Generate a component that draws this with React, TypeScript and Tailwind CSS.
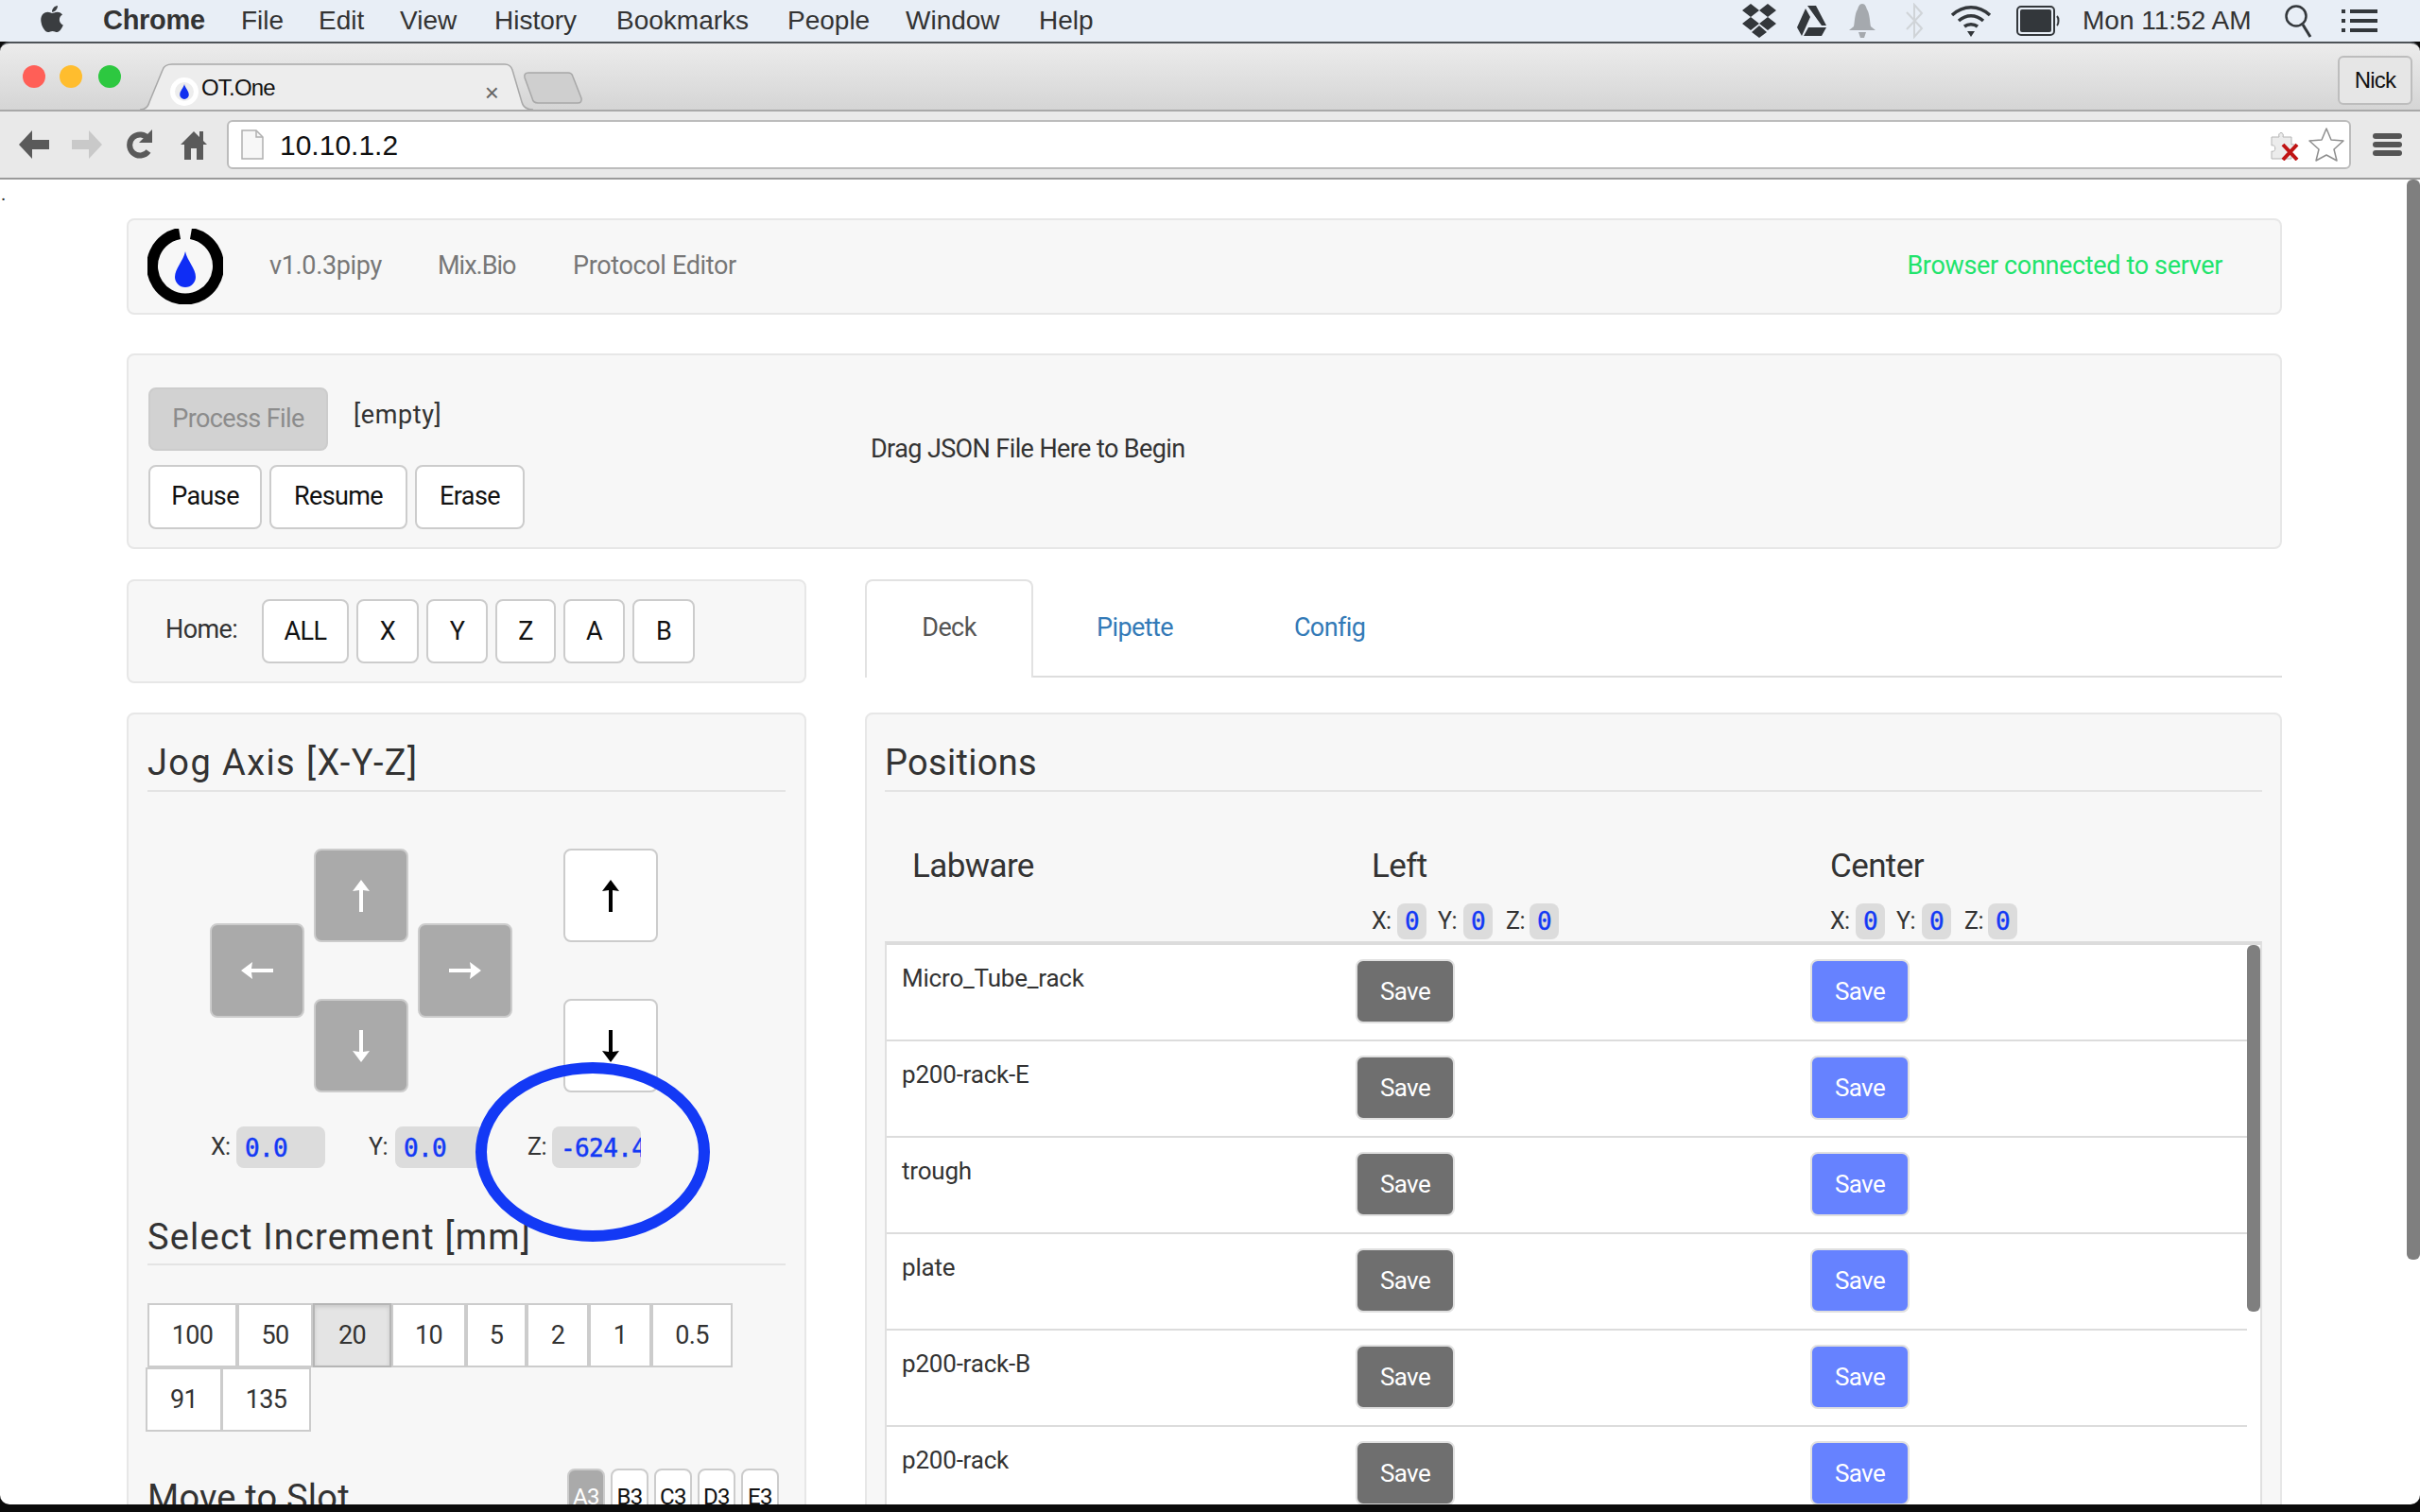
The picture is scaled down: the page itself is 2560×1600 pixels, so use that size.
import { FaApple } from "react-icons/fa";

const ui = "font-['Roboto',sans-serif]";
const panel = "rounded-lg border-2 border-[#e7e7e7] bg-[#f7f7f7]";
const whiteBtn = "flex items-center justify-center rounded-lg border-2 border-[#ccc] bg-white text-[#111]";
const grey = "flex h-full w-full items-center justify-center rounded-lg border-2 border-[#ccc] bg-[#aaa] text-white";

const menus = [
  { label: "File", w: "w-[82px]" },
  { label: "Edit", w: "w-[86px]" },
  { label: "View", w: "w-[100px]" },
  { label: "History", w: "w-[129px]" },
  { label: "Bookmarks", w: "w-[181px]" },
  { label: "People", w: "w-[125px]" },
  { label: "Window", w: "w-[141px]" },
  { label: "Help", w: "w-[60px]" },
];

const homeKeys = [
  { label: "ALL", w: "w-[92px]" },
  { label: "X", w: "w-[66px]" },
  { label: "Y", w: "w-[65px]" },
  { label: "Z", w: "w-[64px]" },
  { label: "A", w: "w-[65px]" },
  { label: "B", w: "w-[66px]" },
];

const increments = [
  { t: "100", w: "w-[95px]" },
  { t: "50", w: "w-[80px]" },
  { t: "20", w: "w-[83px]" },
  { t: "10", w: "w-[79px]" },
  { t: "5", w: "w-[64px]" },
  { t: "2", w: "w-[66px]" },
  { t: "1", w: "w-[66px]" },
  { t: "0.5", w: "w-[86px]" },
];

const rows = ["Micro_Tube_rack", "p200-rack-E", "trough", "plate", "p200-rack-B", "p200-rack"];

function Arrow({ dir, className = "" }: { dir: "up" | "down" | "left" | "right"; className?: string }) {
  const rot = { up: "rotate-0", down: "rotate-180", left: "-rotate-90", right: "rotate-90" }[dir];
  return (
    <svg viewBox="0 0 18 34" className={`h-[34px] w-[18px] ${rot} ${className}`} fill="currentColor">
      <path d="M9 0 L18 12 L11 11 L11 34 L7 34 L7 11 L0 12 Z" />
    </svg>
  );
}

function MenuBar() {
  return (
    <div className="flex h-[44px] items-center bg-[#e8eef6] font-['Liberation_Sans',sans-serif] text-[28px] text-[#333]">
      <FaApple className="ml-[39px] mb-1 h-[32px] w-[32px] text-[#3a3d40]" />
      <span className="ml-[38px] w-[146px] text-[29px] font-bold tracking-[-0.3px]">Chrome</span>
      {menus.map((m) => (
        <span key={m.label} className={m.w}>{m.label}</span>
      ))}
      <div className="ml-auto flex items-center">
        <svg viewBox="0 0 36 38" className="h-[38px] w-[36px] text-[#33373b]" fill="currentColor">
          <path d="M9 1 L18 8 L9 15 L0 8 Z M27 1 L36 8 L27 15 L18 8 Z M9 15 L18 22 L9 29 L0 22 Z M27 15 L36 22 L27 29 L18 22 Z M18 24 L26 31 L18 37 L10 31 Z" />
        </svg>
        <svg viewBox="0 0 32 34" className="ml-[22px] h-[34px] w-[32px] text-[#33373b]" fill="currentColor">
          <path d="M11 1 L20 1 L31 22 L26 22 Z M9 4 L14 13 L5 33 L0 24 Z M12 24 L31 24 L26 33 L7 33 Z" />
        </svg>
        <svg viewBox="0 0 30 36" className="ml-[22px] h-[36px] w-[30px] text-[#a5a9ae]" fill="currentColor">
          <path d="M15 0 C18 0 19 3 20 6 C23 10 23 20 24 24 L29 28 L1 28 L6 24 C7 20 7 10 10 6 C11 3 12 0 15 0 Z M11 30 L19 30 L17 36 L13 36 Z" />
        </svg>
        <svg viewBox="0 0 20 38" className="ml-[30px] h-[38px] w-[20px] text-[#d0d4d8]" fill="none" stroke="currentColor" strokeWidth="2">
          <path d="M2 10 L18 27 L10 36 L10 2 L18 11 L2 28" />
        </svg>
        <svg viewBox="0 0 44 34" className="ml-[28px] h-[34px] w-[44px] text-[#33373b]" fill="none" stroke="currentColor" strokeWidth="3.5">
          <path d="M2 11 C14 0 30 0 42 11 M9 17 C17 10 27 10 35 17 M15 23 C19 20 25 20 29 23" />
          <path d="M18 28 L26 28 L22 34 Z" fill="currentColor" stroke="none" />
        </svg>
        <svg viewBox="0 0 46 34" className="ml-[26px] h-[34px] w-[46px] text-[#33373b]" fill="none">
          <rect x="1" y="2" width="39" height="30" rx="4" stroke="currentColor" strokeWidth="2" />
          <rect x="4" y="5" width="33" height="24" rx="2" fill="currentColor" />
          <path d="M43 12 C45 14 45 20 43 22" stroke="currentColor" strokeWidth="2" />
        </svg>
        <span className="ml-[24px] w-[179px] whitespace-nowrap">Mon 11:52 AM</span>
        <svg viewBox="0 0 30 36" className="ml-[34px] h-[36px] w-[30px] text-[#33373b]" fill="none" stroke="currentColor" strokeWidth="2.5">
          <circle cx="13" cy="13" r="10.5" />
          <path d="M20 22 L28 35" strokeWidth="3" />
        </svg>
        <svg viewBox="0 0 38 24" className="ml-[31px] mr-[45px] h-[24px] w-[38px] text-[#33373b]" fill="currentColor">
          <path d="M0 0h4v4H0z M9 0h29v4H9z M0 10h4v4H0z M9 10h29v4H9z M0 20h4v4H0z M9 20h29v4H9z" />
        </svg>
      </div>
    </div>
  );
}

function TabStrip() {
  return (
    <div className="relative flex h-[74px] items-center rounded-t-[10px] border-t-2 border-b-2 border-t-[#4e5358] border-b-[#a8a8a8] bg-linear-to-b from-[#ececec] to-[#d5d5d5]">
      <span className="ml-[24px] h-[24px] w-[24px] rounded-full bg-[#ff5f57]" />
      <span className="ml-[15px] h-[24px] w-[24px] rounded-full bg-[#ffbd2e]" />
      <span className="ml-[17px] h-[24px] w-[24px] rounded-full bg-[#2dc840]" />
      <div className="relative ml-[20px] flex h-[70px] w-[416px] items-end pb-[1px]">
        <svg viewBox="0 0 416 70" className="absolute inset-0 h-full w-full">
          <path d="M0 70 Q8 70 10 62 L24 28 Q26 22 34 22 L386 22 Q392 22 394 28 L404 62 Q406 70 416 70 L416 72 L0 72 Z" fill="#ededed" stroke="#a8a8a8" strokeWidth="1.5" />
        </svg>
        <span className="relative ml-[32px] mb-[3px] flex h-[30px] w-[30px] items-center justify-center rounded-full border-[5px] border-white">
          <svg viewBox="0 0 12 20" className="h-[16px] w-[10px]"><path d="M6 0 C7 5 12 9 12 14 A6 6 0 0 1 0 14 C0 9 5 5 6 0 Z" fill="#1030f0" /></svg>
        </span>
        <span className="relative ml-[3px] mb-[4px] font-['Liberation_Sans',sans-serif] text-[24px] tracking-[-0.8px] text-[#111]">OT.One</span>
        <span className="relative ml-auto mr-[36px] mb-[4px] font-['Liberation_Sans',sans-serif] text-[26px] leading-none text-[#666]">×</span>
      </div>
      <svg viewBox="0 0 64 34" className="ml-[-11px] mt-[24px] h-[34px] w-[64px]">
        <path d="M2 6 Q1 1 6 1 L48 1 Q52 1 53 5 L62 28 Q63 33 58 33 L16 33 Q11 33 10 28 Z" fill="#cfcfcf" stroke="#a8a8a8" strokeWidth="1.5" />
      </svg>
      <div className="ml-auto mr-[8px] mt-[8px] flex h-[52px] w-[79px] items-center justify-center rounded-md border-2 border-[#bdbdbd] bg-[#e6e6e6] font-['Liberation_Sans',sans-serif] text-[24px] tracking-[-0.8px] text-[#111]">
        Nick
      </div>
    </div>
  );
}

function Toolbar() {
  return (
    <div className="flex h-[72px] items-center border-b-2 border-b-[#9a9a9a] bg-[#e9e9e9]">
      <svg viewBox="0 0 34 30" className="ml-[20px] h-[30px] w-[34px] text-[#5a5a5a]" fill="currentColor">
        <path d="M14 0 L0 15 L14 30 L14 20 L32 20 L32 10 L14 10 Z" />
      </svg>
      <svg viewBox="0 0 34 30" className="ml-[20px] h-[30px] w-[34px] text-[#c9c9c9]" fill="currentColor">
        <path d="M20 0 L34 15 L20 30 L20 20 L2 20 L2 10 L20 10 Z" />
      </svg>
      <svg viewBox="0 0 28 32" className="ml-[25px] h-[32px] w-[28px] text-[#5a5a5a]" fill="none" stroke="currentColor" strokeWidth="6">
        <path d="M24 10 A11 11 0 1 0 24 23" />
        <path d="M28 0 L28 14 L14 14 Z" fill="currentColor" stroke="none" />
      </svg>
      <svg viewBox="0 0 28 32" className="ml-[30px] h-[32px] w-[28px] text-[#5a5a5a]" fill="currentColor">
        <path d="M14 2 L20 8 L20 2 L24 2 L24 12 L28 16 L24 16 L24 32 L17 32 L17 20 L11 20 L11 32 L4 32 L4 16 L0 16 Z" />
      </svg>
      <div className="ml-[21px] flex h-[52px] w-[2247px] items-center rounded-md border-2 border-[#bcbcbc] bg-white">
        <svg viewBox="0 0 24 32" className="ml-[13px] h-[32px] w-[24px]">
          <path d="M1 1 L16 1 L23 8 L23 31 L1 31 Z" fill="#f7f7f7" stroke="#b0b0b0" strokeWidth="1.5" />
          <path d="M16 1 L16 8 L23 8" fill="none" stroke="#b0b0b0" strokeWidth="1.5" />
        </svg>
        <span className="ml-[17px] font-['Liberation_Sans',sans-serif] text-[30px] text-[#111]">10.10.1.2</span>
        <svg viewBox="0 0 32 34" className="ml-auto h-[34px] w-[32px]">
          <path d="M2 9 L10 9 C8 3 16 3 14 9 L23 9 L23 17 C29 15 29 24 23 22 L23 32 L2 32 L2 24 C7 26 7 16 2 18 Z" fill="#ececec" stroke="#b5b5b5" strokeWidth="1" />
          <path d="M14 17 L29 33 M29 17 L14 33" stroke="#c01414" strokeWidth="4" />
        </svg>
        <svg viewBox="0 0 38 36" className="ml-[9px] mr-[5px] h-[36px] w-[38px]">
          <path d="M19 1 L24 13 L37 14 L27 23 L30 35 L19 29 L8 35 L11 23 L1 14 L14 13 Z" fill="#fff" stroke="#8f8f8f" strokeWidth="1.5" strokeLinejoin="round" />
        </svg>
      </div>
      <div className="ml-[23px] flex w-[31px] flex-col gap-[3px]">
        <span className="h-[6px] rounded-full bg-[#555]" />
        <span className="h-[6px] rounded-full bg-[#555]" />
        <span className="h-[6px] rounded-full bg-[#555]" />
      </div>
    </div>
  );
}

function Logo() {
  return (
    <svg viewBox="0 0 80 80" className="h-[80px] w-[80px]">
      <path d="M34 5 A35 35 0 1 0 46 5" fill="none" stroke="#000" strokeWidth="12" />
      <path d="M40 24 C42 34 51 42 51 51 A11 11 0 0 1 29 51 C29 42 38 34 40 24 Z" fill="#0f2df5" />
    </svg>
  );
}

function Value({ v }: { v: string }) {
  return (
    <span className="flex h-[44px] w-[94px] items-center overflow-hidden whitespace-pre rounded-lg bg-[#dcdcdc] pl-[9px] pt-[2px] font-['DejaVu_Sans_Mono',monospace] text-[26px] tracking-[-0.6px] text-[#1339f5] [-webkit-text-stroke:0.5px_#1339f5]">
      {v}
    </span>
  );
}

function Chip() {
  return (
    <span className="flex h-[38px] w-[31px] items-center justify-center rounded-lg bg-[#dcdcdc] font-['DejaVu_Sans_Mono',monospace] text-[26px] text-[#1339f5] [-webkit-text-stroke:0.4px_#1339f5]">0</span>
  );
}

function Chips() {
  return (
    <div className="flex h-[38px] items-center text-[25px] text-[#333]">
      <span className="w-[27px]">X:</span>
      <Chip />
      <span className="ml-[12px] w-[27px]">Y:</span>
      <Chip />
      <span className="ml-[14px] w-[25px]">Z:</span>
      <Chip />
    </div>
  );
}

function JogPanel() {
  return (
    <div className={`${panel} h-[900px] px-[20px]`}>
      <div className="flex h-[82px] items-end border-b-2 border-[#e4e4e4] pb-[10px] text-[38px] leading-none tracking-[1.4px] text-[#333]">Jog Axis [X-Y-Z]</div>
      {/* d-pad rows overlap on purpose: left and right sit between up and down */}
      <div className="ml-[66px] mt-[60px] grid grid-cols-[100px_10px_100px_10px_100px_54px_100px] grid-rows-[79px_20px_60px_20px_79px]">
        <div className="col-start-3 row-span-2 row-start-1"><button className={grey}><Arrow dir="up" /></button></div>
        <div className="col-start-1 row-span-3 row-start-2"><button className={grey}><Arrow dir="left" /></button></div>
        <div className="col-start-5 row-span-3 row-start-2"><button className={grey}><Arrow dir="right" /></button></div>
        <div className="col-start-3 row-span-2 row-start-4"><button className={grey}><Arrow dir="down" /></button></div>
        <div className="col-start-7 row-span-2 row-start-1"><button className={`${whiteBtn} h-full w-full`}><Arrow dir="up" className="text-black" /></button></div>
        <div className="col-start-7 row-span-2 row-start-4"><button className={`${whiteBtn} h-full w-full`}><Arrow dir="down" className="text-black" /></button></div>
      </div>
      <div className="ml-[67px] mt-[36px] flex items-center text-[25px] text-[#333]">
        <span className="w-[27px]">X:</span>
        <Value v="0.0" />
        <span className="ml-[46px] w-[28px]">Y:</span>
        <Value v="0.0" />
        <span className="ml-[46px] w-[26px]">Z:</span>
        <Value v="-624.4" />
      </div>
      <div className="mt-[61px] flex h-[42px] items-end border-b-2 border-[#e4e4e4] text-[38px] leading-none tracking-[1.2px] text-[#333]">
        <span className="mb-[9px]">Select Increment [mm]</span>
      </div>
      <div className="mt-[40px] flex text-[27px] text-[#333]">
        {increments.map(({ t, w }) => (
          <span key={t} className={`flex h-[68px] ${w} items-center justify-center border-2 ${t === "20" ? "border-[#b5b5b5] bg-[#e4e4e4] shadow-[inset_0_2px_4px_rgba(0,0,0,0.12)]" : "border-[#ccc] bg-white"}`}>{t}</span>
        ))}
      </div>
      <div className="-ml-[2px] flex text-[27px] text-[#333]">
        <span className="flex h-[68px] w-[81px] items-center justify-center border-2 border-[#ccc] bg-white">91</span>
        <span className="-ml-px flex h-[68px] w-[95px] items-center justify-center border-2 border-[#ccc] bg-white">135</span>
      </div>
      <div className="mt-[39px] flex items-start">
        <span className="mt-[12px] text-[38px] leading-none tracking-[0.2px] text-[#333]">Move to Slot</span>
        <div className="ml-auto mr-[7px] flex gap-[6px] text-[24px]">
          <span className="flex h-[60px] w-[40px] items-center justify-center rounded-lg border-2 border-[#ccc] bg-[#aaa] text-white">A3</span>
          {["B3", "C3", "D3", "E3"].map((s) => (
            <span key={s} className={`${whiteBtn} h-[60px] w-[40px]`}>{s}</span>
          ))}
        </div>
      </div>
    </div>
  );
}

function PositionsPanel() {
  return (
    <div className={`${panel} h-[900px] px-[19px]`}>
      <div className="flex h-[82px] items-end border-b-2 border-[#e4e4e4] pb-[10px] text-[38px] leading-none tracking-[0.3px] text-[#333]">Positions</div>
      <div className="flex">
        <div className="w-[515px] pl-[29px] pt-[61px] text-[35px] leading-none text-[#333]">Labware</div>
        <div className="w-[485px] pt-[61px]">
          <div className="text-[35px] leading-none text-[#333]">Left</div>
          <div className="mt-[22px]"><Chips /></div>
        </div>
        <div className="pt-[61px]">
          <div className="text-[35px] leading-none text-[#333]">Center</div>
          <div className="mt-[22px]"><Chips /></div>
        </div>
      </div>
      <div className="relative mt-[2px] border-x-2 border-t-4 border-x-[#e0e0e0] border-t-[#dcdcdc] bg-white">
        {rows.map((r) => (
          <div key={r} className="mr-[14px] flex h-[102px] items-start border-b-2 border-[#dcdcdc]">
            <span className="w-[496px] pl-[16px] pt-[17px] text-[26px] leading-[36px] tracking-[-0.2px] text-[#333]">{r}</span>
            <button className="mt-[15px] flex h-[68px] w-[105px] items-center justify-center rounded-lg border-2 border-[#e0e0e0] bg-[#6f6f6f] text-[26px] text-white">Save</button>
            <button className="ml-[376px] mt-[15px] flex h-[68px] w-[105px] items-center justify-center rounded-lg border-2 border-[#e0e0e0] bg-[#6682ff] text-[26px] text-white">Save</button>
          </div>
        ))}
        <span className="absolute right-0 top-0 h-[388px] w-[14px] rounded-md bg-[#7f7f7f]" />
      </div>
    </div>
  );
}

export default function App() {
  return (
    <div className="h-[1600px] w-[2560px] overflow-hidden bg-[#0b0b0b]">
      <MenuBar />
      <TabStrip />
      <Toolbar />
      <div className={`${ui} relative h-[1402px] overflow-hidden rounded-b-[10px] bg-white tracking-[-0.6px]`}>
        <div className="h-[41px] pl-[1px] text-[20px] leading-[30px] text-[#333]">.</div>
        <div className="ml-[134px] w-[2280px]">
          <div className={`${panel} flex h-[102px] items-center pb-[2px] text-[27px] tracking-[-0.35px] text-[#777]`}>
            <div className="ml-[20px] mt-[2px]"><Logo /></div>
            <span className="ml-[49px] w-[178px]">v1.0.3pipy</span>
            <span className="w-[143px] tracking-[-1px]">Mix.Bio</span>
            <span>Protocol Editor</span>
            <span className="ml-auto mr-[61px] text-[#1fe46c]">Browser connected to server</span>
          </div>

          <div className={`${panel} mt-[41px] flex h-[207px] text-[27px] text-[#333]`}>
            <div className="ml-[21px] mt-[34px]">
              <div className="flex">
                <button className="flex h-[67px] w-[190px] items-center justify-center rounded-lg border-2 border-[#ccc] bg-[#d2d2d2] text-[#8c8c8c]">Process File</button>
                <span className="ml-[27px] mt-[9px] tracking-[0.6px]">[empty]</span>
              </div>
              <div className="mt-[15px] flex gap-[8px]">
                <button className={`${whiteBtn} h-[68px] w-[120px] pb-[2px]`}>Pause</button>
                <button className={`${whiteBtn} h-[68px] w-[146px] pb-[2px]`}>Resume</button>
                <button className={`${whiteBtn} h-[68px] w-[116px] pb-[2px]`}>Erase</button>
              </div>
            </div>
            <span className="ml-[366px] mt-[79px]">Drag JSON File Here to Begin</span>
          </div>

          <div className="mt-[32px] flex gap-[62px]">
            <div className="w-[719px]">
              <div className={`${panel} flex h-[110px] items-center text-[27px] text-[#333]`}>
                <span className="ml-[39px] mt-[-3px] w-[102px]">Home:</span>
                <div className="flex gap-[8px]">
                  {homeKeys.map((k) => (
                    <button key={k.label} className={`${whiteBtn} h-[68px] ${k.w}`}>{k.label}</button>
                  ))}
                </div>
              </div>
              <div className="mt-[31px]"><JogPanel /></div>
            </div>

            <div className="w-[1499px]">
              <div className="flex h-[104px] border-b-2 border-[#ddd] text-[27px] text-[#337ab7]">
                <div className="-mb-[2px] flex h-[104px] w-[178px] items-center justify-center rounded-t-lg border-2 border-b-0 border-[#e2e2e2] bg-white pb-[4px] text-[#555]">Deck</div>
                <span className="ml-[67px] mt-[31px]">Pipette</span>
                <span className="ml-[128px] mt-[31px]">Config</span>
              </div>
              <div className="mt-[37px]"><PositionsPanel /></div>
            </div>
          </div>
        </div>
        <span className="absolute right-0 top-0 h-[1143px] w-[14px] rounded-md bg-[#7f7f7f]" />
      </div>
      <svg viewBox="0 0 248 190" className="absolute left-[503px] top-[1124px] h-[190px] w-[248px]" fill="none">
        <ellipse cx="124" cy="95" rx="118" ry="89" stroke="#1339f5" strokeWidth="12" />
      </svg>
    </div>
  );
}
